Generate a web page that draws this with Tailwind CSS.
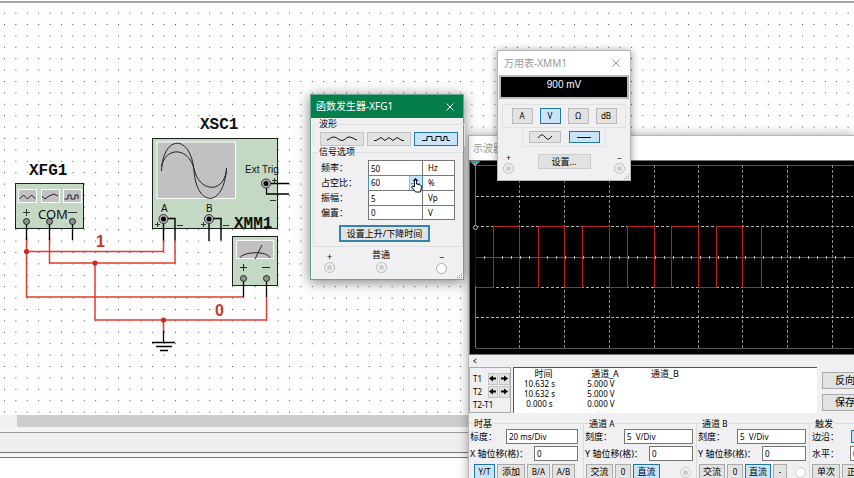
<!DOCTYPE html>
<html lang="zh-CN">
<head>
    <meta charset="UTF-8">
    <meta name="viewport" content="width=device-width, initial-scale=1.0">
    <title>XFG1 / XSC1 / XMM1</title>

    <!-- Tailwind CSS -->
    <script src="https://cdn.jsdelivr.net/npm/@tailwindcss/browser@4"></script>
</head>
<body class="h-screen overflow-hidden bg-white text-black font-['Noto_Sans','Noto_Sans_CJK_SC',sans-serif]">
    <div class="relative h-full flex flex-col overflow-hidden">
        <!-- Schematic -->
        <main class="flex-1 min-h-0 mt-px border-t-2 border-[#a6a6a6] bg-[#fefefe]">
            <svg class="block w-full h-full" fill="none">
                <defs>
                    <pattern id="dots" x="4" y="9.6" width="11.4" height="11.4" patternUnits="userSpaceOnUse">
                        <rect width="1" height="1" fill="#000" fill-opacity=".7"/>
                    </pattern>
                </defs>
                <rect width="100%" height="100%" fill="url(#dots)"/>
                <g transform="translate(0 -3)">
                    <!-- XFG1 -->
                    <rect x="15.5" y="183.5" width="68" height="45" fill="#c3d9c4" stroke="#1c211c"/>
                    <g fill="#c2c0c3" stroke="#fff">
                        <rect x="18.5" y="189.5" width="18" height="13"/>
                        <rect x="41.5" y="189.5" width="18" height="13"/>
                        <rect x="63.5" y="189.5" width="18" height="13"/>
                    </g>
                    <path d="M19.5 199l4-4 4 4 4-4 4 4M42 196l3 3 4-3 5-2 4 2M64.5 199H68v-4h3v4h4v-4h3v4" stroke="#222"/>
                    <path d="M23 212.5h7M26.5 209v7M68 212.5h9" stroke="#333"/>
                    <!-- XSC1 -->
                    <rect x="152.5" y="138.5" width="125" height="90" fill="#c3d9c4" stroke="#1c211c"/>
                    <rect x="157" y="142" width="78.5" height="56.5" fill="#c2c0c3" stroke="#fff"/>
                    <path d="M161.5 171C163 134 191 134 194 171S224 208 226.5 168M161.5 167C165 146 189 147 194 169S222 195 226.5 171" stroke="#222"/>
                    <path d="M266 183.5h23M266.5 183v11h22.5" stroke="#000" stroke-width="1.3"/>
                    <path d="M163.5 219v22M164 218.5h11v22M209 219v22M209 218.5h12v22" stroke="#000" stroke-width="1.4"/>
                    <path d="M155 224.5h5M157.5 222v5M201 224.5h5M203.5 222v5M177 225.5h6M223 225.5h6M272 180.5h5M274.5 178v5M270 200.5h6" stroke="#333"/>
                    <!-- XMM1 -->
                    <rect x="232.5" y="236.5" width="45" height="49" fill="#c3d9c4" stroke="#1c211c"/>
                    <rect x="236.5" y="240.5" width="37" height="18" fill="#c2c0c3" stroke="#fff"/>
                    <path d="M240 258c2-6 27-8 30 0M255 259l7-14" stroke="#222"/>
                    <path d="M240 267.5h7M243.5 264v7M262 267.5h8" stroke="#222"/>
                    <!-- Wires -->
                    <g stroke="#e03c30" stroke-width="1.5">
                        <path d="M26.5 238V297H243.5M26.5 251.5H163.5V240M49.5 238V263H175V240"/>
                        <path d="M95 263V320H266.5V297M163.5 320V333"/>
                    </g>
                    <path d="M26.5 222v18M49.5 222v18M72.5 222v18M243.5 279v18M266.5 279v18M163.5 331v11M152 342.5h23M156 346.5h16M160 350.5h8" stroke="#000" stroke-width="1.3"/>
                    <g fill="#c62d22">
                        <circle cx="26.5" cy="251.5" r="2.6"/>
                        <circle cx="95" cy="263" r="2.6"/>
                        <circle cx="163.5" cy="320" r="2.6"/>
                    </g>
                    <!-- Terminals -->
                    <g fill="#8d9490" stroke="#222">
                        <circle cx="26.5" cy="221.5" r="3"/>
                        <circle cx="49.5" cy="221.5" r="3"/>
                        <circle cx="72.5" cy="221.5" r="3"/>
                        <circle cx="243.5" cy="278.5" r="3"/>
                        <circle cx="266.5" cy="278.5" r="3"/>
                    </g>
                    <g fill="#b5b8b6" stroke="#333">
                        <circle cx="163.5" cy="219" r="4.5"/>
                        <circle cx="209" cy="219" r="4.5"/>
                        <circle cx="266" cy="183.5" r="4.5"/>
                    </g>
                    <g fill="#000">
                        <circle cx="163.5" cy="219" r="2.5"/>
                        <circle cx="209" cy="219" r="2.5"/>
                        <circle cx="266" cy="183.5" r="2.5"/>
                    </g>
                    <g class="font-['Courier_New','Liberation_Mono',monospace] text-[16px] font-bold" fill="#111">
                        <text x="29" y="175">XFG1</text>
                        <text x="200" y="129">XSC1</text>
                        <text x="234" y="228">XMM1</text>
                    </g>
                    <g class="font-['Liberation_Sans',sans-serif] text-[10px]" fill="#111">
                        <text x="245" y="173">Ext Trig</text>
                        <text x="161" y="212">A</text>
                        <text x="206" y="212">B</text>
                    </g>
                    <text x="38" y="219" class="text-[13px]" fill="#111">COM</text>
                    <g class="font-['Liberation_Sans',sans-serif] text-[16px] font-bold" fill="#c9362b">
                        <text x="96" y="247">1</text>
                        <text x="215" y="316">0</text>
                    </g>
                </g>
            </svg>
        </main>
        <div class="h-3 flex bg-[#cdcbcd]"><div class="w-[17px] bg-[#f1f0f2]"></div></div>
        <div class="h-[5px] bg-[#f4f3f5]"></div>
        <div class="h-5 border-t border-[#999] bg-[#f0eef1]"></div>
        <div class="h-[6px] border-y border-[#777] bg-[#f6f6f6]"></div>
        <div class="h-5 bg-white"></div>

        <!-- Oscilloscope -->
        <section class="absolute left-[468px] right-0 top-[135px] h-[360px] flex flex-col border-l border-t border-[#b5b5b5] bg-[#f0eff1] text-[9px] shadow-[0_0_10px_rgba(0,0,0,0.35)]">
            <h2 class="h-6 shrink-0 pl-1 bg-white text-[10px] leading-6 text-[#999]">示波器-XSC1</h2>
            <svg class="block w-full h-[194px] shrink-0 bg-black" fill="none">
                <path d="M0 .5H400M.5 0V194" stroke="#777"/>
                <path d="M7 5.5H384M7 188.5H384" stroke="#555"/>
                <path d="M7 97.5H384" stroke="#555"/>
                <path d="M50.5 5V188M95.5 5V188M140.5 5V188M185.5 5V188M229.5 5V188M273.5 5V188M318.5 5V188M363.5 5V188" stroke="#8a8a8a" stroke-dasharray="3 2"/>
                <path d="M7 36.5H384M7 66.5H384M7 127.5H384M7 157.5H384" stroke="#b0b0b0" stroke-dasharray="3 2"/>
                <path d="M15 97.5H384" stroke="#bbb" stroke-width="3" stroke-dasharray="1 8"/>
                <path d="M6.5 5V188" stroke="#3c9c68"/>
                <path d="M6.5 69V126" stroke="#15154a"/>
                <path d="M7 127.5H24.5V66.5H50.5V127.5H69.5V66.5H95.5V127.5H113.5V66.5H140.5V127.5H158.5V66.5H185.5V127.5H202.5V66.5H229.5V127.5H247.5V66.5H273.5V127.5H292.5V66.5" stroke="#bc1f1b"/>
                <path d="M1 1h10l-5 5z" fill="#c9d9dc"/>
                <path d="M1 1h10l-2 2H3z" fill="#39a5a5"/>
                <path d="M4 3h3v2z" fill="#cc3c3c"/>
                <circle cx="6.5" cy="67.5" r="2" fill="#000" stroke="#bbb"/>
            </svg>
            <div class="h-[13px] shrink-0 pl-[3px] flex items-center border-t border-[#777]">
                <button type="button" aria-label="向左滚动">
                    <svg class="block size-[6px]" viewBox="0 0 6 6" fill="none"><path d="M4.5 1L1.5 3l3 2" stroke="#333"/></svg>
                </button>
            </div>

            <!-- Cursor readings -->
            <div class="h-[46px] shrink-0 flex">
                <div class="w-[42px] pl-[3px] pt-1 border border-[#aaa] text-[8px] leading-[13px]">
                    <div class="flex items-center"><span class="w-[15px]">T1</span>
                        <button type="button" aria-label="T1 左移" class="w-[11px] h-3 mr-px grid place-items-center border border-[#c4c4c4] bg-[#e2e2e2]"><svg class="size-[7px]" viewBox="0 0 7 7"><path d="M0 3.5L4 .5V2.5H7V4.5H4V6.5z"/></svg></button>
                        <button type="button" aria-label="T1 右移" class="w-[11px] h-3 grid place-items-center border border-[#c4c4c4] bg-[#e2e2e2]"><svg class="size-[7px]" viewBox="0 0 7 7"><path d="M7 3.5L3 .5V2.5H0V4.5H3V6.5z"/></svg></button>
                    </div>
                    <div class="flex items-center"><span class="w-[15px]">T2</span>
                        <button type="button" aria-label="T2 左移" class="w-[11px] h-3 mr-px grid place-items-center border border-[#c4c4c4] bg-[#e2e2e2]"><svg class="size-[7px]" viewBox="0 0 7 7"><path d="M0 3.5L4 .5V2.5H7V4.5H4V6.5z"/></svg></button>
                        <button type="button" aria-label="T2 右移" class="w-[11px] h-3 grid place-items-center border border-[#c4c4c4] bg-[#e2e2e2]"><svg class="size-[7px]" viewBox="0 0 7 7"><path d="M7 3.5L3 .5V2.5H0V4.5H3V6.5z"/></svg></button>
                    </div>
                    <div>T2-T1</div>
                </div>
                <div class="flex-1 ml-[2px] border-t border-l border-[#555] bg-white">
                    <table class="table-fixed text-[8px] leading-[10px]">
                        <thead class="text-[9px] leading-[11px]">
                            <tr>
                                <th class="w-[59px] font-normal">时间</th>
                                <th class="w-[64px] font-normal">通道_A</th>
                                <th class="w-[56px] font-normal">通道_B</th>
                            </tr>
                        </thead>
                        <tbody class="text-center">
                            <tr><td class="pr-2">10.632 s</td><td class="pr-2">5.000 V</td><td></td></tr>
                            <tr><td class="pr-2">10.632 s</td><td class="pr-2">5.000 V</td><td></td></tr>
                            <tr><td class="pr-2">0.000 s</td><td class="pr-2">0.000 V</td><td></td></tr>
                        </tbody>
                    </table>
                </div>
                <div class="w-8 ml-[5px] pt-[5px] flex flex-col gap-[5px]">
                    <button type="button" class="h-[17px] pl-3 border border-r-0 border-[#aaa] bg-[#e2e2e2] text-left text-[10px] leading-[15px] whitespace-nowrap overflow-hidden">反向</button>
                    <button type="button" class="h-[17px] pl-3 border border-r-0 border-[#aaa] bg-[#e2e2e2] text-left text-[10px] leading-[15px] whitespace-nowrap overflow-hidden">保存</button>
                </div>
            </div>

            <!-- Settings -->
            <div class="flex mt-[5px] overflow-hidden whitespace-nowrap">
                <fieldset class="w-[115px] shrink-0 border-t border-r border-[#dcdcdc] pr-[5px]">
                    <legend class="ml-1 px-px leading-[11px]">时基</legend>
                    <div class="h-[15px] flex items-center justify-between pl-px">
                        <label for="tbScale">标度：</label>
                        <input id="tbScale" value="20 ms/Div" class="w-[72px] h-[15px] pl-[2px] border border-[#777] bg-white text-[8px]">
                    </div>
                    <div class="h-[15px] mt-[2px] flex items-center justify-between pl-px">
                        <label for="tbPos">X 轴位移(格)：</label>
                        <input id="tbPos" value="0" class="w-11 h-[15px] pl-[2px] border border-[#777] bg-white text-[8px]">
                    </div>
                    <div class="mt-[3px] pl-[5px] flex gap-[2px] text-[8px]">
                        <button type="button" class="w-[21px] h-4 border border-[#23769b] bg-[#c9e3f9]">Y/T</button>
                        <button type="button" class="w-7 h-4 border border-[#aaa] bg-[#e2e2e2] text-[9px]">添加</button>
                        <button type="button" class="w-[23px] h-4 border border-[#aaa] bg-[#e2e2e2]">B/A</button>
                        <button type="button" class="w-[23px] h-4 border border-[#aaa] bg-[#e2e2e2]">A/B</button>
                    </div>
                </fieldset>
                <fieldset class="w-[113px] shrink-0 border-t border-r border-[#dcdcdc] pr-[3px]">
                    <legend class="ml-1 px-px leading-[11px]">通道 <span class="text-[8px]">A</span></legend>
                    <div class="h-[15px] flex items-center justify-between pl-px">
                        <label for="aScale">刻度：</label>
                        <input id="aScale" value="5  V/Div" class="w-[69px] h-[15px] pl-[2px] border border-[#777] bg-white text-[8px] whitespace-pre">
                    </div>
                    <div class="h-[15px] mt-[2px] flex items-center justify-between pl-px">
                        <label for="aPos">Y 轴位移(格)：</label>
                        <input id="aPos" value="0" class="w-11 h-[15px] pl-[2px] border border-[#777] bg-white text-[8px]">
                    </div>
                    <div class="mt-[3px] pl-[2px] flex items-center gap-[2px]">
                        <button type="button" class="w-[27px] h-4 border border-[#aaa] bg-[#e2e2e2]">交流</button>
                        <button type="button" class="w-4 h-4 border border-[#aaa] bg-[#e2e2e2] text-[8px]">0</button>
                        <button type="button" class="w-[27px] h-4 border border-[#23769b] bg-[#c9e3f9]">直流</button>
                        <input type="radio" name="chA" aria-label="通道 A" class="appearance-none size-[11px] ml-auto mr-[2px] rounded-full border border-[#ccc] bg-[#ccc] bg-clip-content p-[2px]">
                    </div>
                </fieldset>
                <fieldset class="w-[113px] shrink-0 border-t border-r border-[#dcdcdc] pr-[3px]">
                    <legend class="ml-1 px-px leading-[11px]">通道 <span class="text-[8px]">B</span></legend>
                    <div class="h-[15px] flex items-center justify-between pl-px">
                        <label for="bScale">刻度：</label>
                        <input id="bScale" value="5  V/Div" class="w-[69px] h-[15px] pl-[2px] border border-[#777] bg-white text-[8px] whitespace-pre">
                    </div>
                    <div class="h-[15px] mt-[2px] flex items-center justify-between pl-px">
                        <label for="bPos">Y 轴位移(格)：</label>
                        <input id="bPos" value="0" class="w-11 h-[15px] pl-[2px] border border-[#777] bg-white text-[8px]">
                    </div>
                    <div class="mt-[3px] pl-[2px] flex items-center gap-[2px]">
                        <button type="button" class="w-[26px] h-4 border border-[#aaa] bg-[#e2e2e2]">交流</button>
                        <button type="button" class="w-4 h-4 border border-[#aaa] bg-[#e2e2e2] text-[8px]">0</button>
                        <button type="button" class="w-[26px] h-4 border border-[#23769b] bg-[#c9e3f9]">直流</button>
                        <button type="button" class="w-[14px] h-4 border border-[#aaa] bg-[#e2e2e2] text-[8px]">-</button>
                        <input type="radio" name="chB" aria-label="通道 B" class="appearance-none size-[11px] ml-auto rounded-full border border-[#ccc] bg-white">
                    </div>
                </fieldset>
                <fieldset class="w-[115px] shrink-0 border-t border-[#dcdcdc]">
                    <legend class="ml-1 px-px leading-[11px]">触发</legend>
                    <div class="h-[15px] flex items-center pl-[2px]">
                        <label for="edge" class="w-[39px]">边沿：</label>
                        <button type="button" id="edge" class="w-5 h-[13px] border border-[#23769b] bg-[#c9e3f9]"></button>
                    </div>
                    <div class="h-[15px] mt-[2px] flex items-center pl-[2px]">
                        <label for="level" class="w-[38px]">水平：</label>
                        <input id="level" value="0" class="w-11 h-[15px] pl-[2px] border border-[#777] bg-white text-[8px]">
                    </div>
                    <div class="mt-[3px] pl-[2px] flex gap-[2px]">
                        <button type="button" class="w-7 h-4 border border-[#aaa] bg-[#e2e2e2]">单次</button>
                        <button type="button" class="w-7 h-4 border border-[#aaa] bg-[#e2e2e2]">正常</button>
                    </div>
                </fieldset>
            </div>
        </section>

        <!-- Multimeter -->
        <section class="absolute left-[497px] top-[50px] w-[134px] flex flex-col border border-[#b5b5b5] bg-[#f0eff1] text-[8px] shadow-[0_1px_8px_rgba(0,0,0,0.4)]">
            <header class="h-6 px-[6px] pr-[10px] flex items-center justify-between bg-white text-[10px] text-[#999]">
                <h2>万用表-XMM1</h2>
                <button type="button" aria-label="关闭"><svg class="block size-2" viewBox="0 0 8 8" fill="none"><path d="M.5.5l7 7M7.5.5l-7 7" stroke="#999"/></svg></button>
            </header>
            <output class="h-6 mx-px border-2 border-[#bbb] bg-black text-center text-[10px] leading-4 text-white font-['Liberation_Sans',sans-serif]">900 mV</output>
            <div class="mx-1 mt-[5px] h-6 flex items-center justify-center gap-[7px] border border-[#e2e2e2]">
                <button type="button" class="w-[21px] h-4 border border-[#bbb] bg-[#e2e2e2]">A</button>
                <button type="button" class="w-[21px] h-4 border border-[#23769b] bg-[#c9e3f9]">V</button>
                <button type="button" class="w-[21px] h-4 border border-[#bbb] bg-[#e2e2e2]">Ω</button>
                <button type="button" class="w-[21px] h-4 border border-[#bbb] bg-[#e2e2e2]">dB</button>
            </div>
            <div class="h-[19px] w-[84px] self-center flex items-center justify-center gap-2 border border-t-0 border-[#e2e2e2]">
                <button type="button" aria-label="交流" class="w-8 h-3 grid place-items-center border border-[#bbb] bg-[#e2e2e2]"><svg class="w-4 h-2" fill="none"><path d="M1 5C4 1 6 1 8 4S12 7 15 3" stroke="#111"/></svg></button>
                <button type="button" aria-label="直流" class="w-[31px] h-3 grid place-items-center border border-[#23769b] bg-[#c9e3f9]"><svg class="w-4 h-2" fill="none"><path d="M1 4.5H15" stroke="#111"/></svg></button>
            </div>
            <div class="h-[33px] pt-[6px] px-[5px] flex justify-between">
                <label class="w-[11px] flex flex-col items-center gap-px leading-[9px]">+<input type="radio" name="mmPlus" class="appearance-none size-[11px] rounded-full border border-[#bbb] bg-[#ccc] bg-clip-content p-[2px]"></label>
                <button type="button" class="w-[53px] h-[15px] mt-px border border-[#ccc] bg-[#e2e2e2] text-[9px] leading-3">设置...</button>
                <label class="w-[11px] flex flex-col items-center gap-px leading-[9px]">−<input type="radio" name="mmMinus" class="appearance-none size-[11px] rounded-full border border-[#bbb] bg-[#ccc] bg-clip-content p-[2px]"></label>
            </div>
            <svg class="absolute right-0 bottom-0 size-[7px]" fill="#aaa"><path d="M5 1h1v1H5zM3 3h1v1H3zM5 3h1v1H5zM1 5h1v1H1zM3 5h1v1H3zM5 5h1v1H5z"/></svg>
        </section>

        <!-- Function generator -->
        <section class="absolute left-[310px] top-[94px] w-[154px] flex flex-col border border-[#67a78d] bg-[#f0eff1] text-[9px] shadow-[0_2px_12px_rgba(0,0,0,0.5)]">
            <header class="h-[23px] pl-[5px] pr-[9px] flex items-center justify-between bg-[#057e4c] text-[10px] text-white">
                <h2>函数发生器-XFG1</h2>
                <button type="button" aria-label="关闭"><svg class="block size-2" viewBox="0 0 8 8" fill="none"><path d="M.5.5l7 7M7.5.5l-7 7" stroke="#fff"/></svg></button>
            </header>
            <fieldset class="mx-[2px] border-t border-x border-[#e0e0e0] px-[6px]">
                <legend class="-ml-[2px] px-px leading-3">波形</legend>
                <div class="mt-[2px] flex gap-[3px] justify-center">
                    <button type="button" aria-label="正弦波" class="w-11 h-[14px] grid place-items-center border border-[#c4c4c4] bg-[#e2e2e2]"><svg class="w-8 h-2" fill="none"><path d="M1 5C4 4 5 2 8 2S13 5.5 16 5.5 20 2 23 2 28 4 31 5" stroke="#111"/></svg></button>
                    <button type="button" aria-label="三角波" class="w-11 h-[14px] grid place-items-center border border-[#c4c4c4] bg-[#e2e2e2]"><svg class="w-8 h-2" fill="none"><path d="M1 5.5h2l5-3 4 3 4-3 4 3 4-3 5 3h2" stroke="#111"/></svg></button>
                    <button type="button" aria-label="方波" class="w-11 h-[14px] grid place-items-center border border-[#23769b] bg-[#c9e3f9]"><svg class="w-8 h-2" fill="none"><path d="M2 5.5h5v-4h5v4h4v-4h5v4h3v-4h3v4h3" stroke="#111"/></svg></button>
                </div>
            </fieldset>
            <fieldset class="mx-[2px] border border-[#e0e0e0] px-[7px] pb-1">
                <legend class="-ml-[3px] px-px leading-3">信号选项</legend>
                <div class="mt-[2px] grid grid-cols-[47px_55px_32px] auto-rows-[15px] items-center">
                    <label for="freq">频率：</label>
                    <input id="freq" value="50" class="h-full min-w-0 pl-[2px] border border-b-0 border-[#777] bg-white text-[8px]">
                    <span class="h-full pl-[5px] border border-l-0 border-b-0 border-[#777] bg-white text-[8px] leading-[13px]">Hz</span>
                    <label for="duty">占空比：</label>
                    <div class="h-full flex border border-b-0 border-[#3f93bd] bg-white">
                        <input id="duty" value="60" class="w-10 pl-[2px] text-[8px]">
                        <button type="button" aria-label="调节占空比" class="w-[13px] bg-[#c9e3f9] border-l border-[#bbb]"><svg class="block w-[11px] h-[14px]"><path d="M1 7h9v1H1z" fill="#5b9cd0"/><path d="M5.5 2l3 3h-6zM5.5 13l3-3h-6z"/></svg></button>
                    </div>
                    <span class="h-full pl-[5px] border border-l-0 border-b-0 border-[#777] bg-white text-[8px] leading-[13px]">%</span>
                    <label for="amp">振幅：</label>
                    <input id="amp" value="5" class="h-full min-w-0 pl-[2px] border border-b-0 border-[#777] bg-white text-[8px]">
                    <span class="h-full pl-[5px] border border-l-0 border-b-0 border-[#777] bg-white text-[8px] leading-[13px]">Vp</span>
                    <label for="offset">偏置：</label>
                    <input id="offset" value="0" class="h-full min-w-0 pl-[2px] border border-[#777] bg-white text-[8px]">
                    <span class="h-full pl-[5px] border border-l-0 border-[#777] bg-white text-[8px] leading-[13px]">V</span>
                </div>
                <button type="button" class="block w-[91px] h-[17px] mt-[5px] ml-[18px] border-2 border-[#3483a8] bg-[#e2e2e2] text-[9px] leading-3 whitespace-nowrap">设置上升/下降时间</button>
            </fieldset>
            <div class="h-8 pt-[2px] pl-[13px] pr-4 grid grid-cols-[11px_92px_1fr]">
                <label class="w-[11px] pt-[3px] flex flex-col items-center leading-[10px]">+<input type="radio" name="fgPlus" class="appearance-none size-[11px] rounded-full border border-[#bbb] bg-[#ccc] bg-clip-content p-[2px]"></label>
                <label class="flex flex-col items-center gap-[2px] leading-[11px]">普通<input type="radio" name="fgCom" class="appearance-none size-[11px] rounded-full border border-[#bbb] bg-[#ccc] bg-clip-content p-[2px]"></label>
                <label class="w-[11px] pt-1 flex flex-col items-center justify-self-end leading-[10px]">−<input type="radio" name="fgMinus" class="appearance-none size-[11px] rounded-full border border-[#aaa] bg-white"></label>
            </div>
            <svg class="absolute right-0 bottom-0 size-[7px]" fill="#999"><path d="M5 1h1v1H5zM3 3h1v1H3zM5 3h1v1H5zM1 5h1v1H1zM3 5h1v1H3zM5 5h1v1H5z"/></svg>
        </section>

        <!-- Mouse pointer -->
        <svg class="absolute left-[411px] top-[179px] w-[11px] h-[14px]" viewBox="0 0 11 14"><path d="M3.5 1.5q1-1 2 0V5l4 1q1 .5 1 2L9.5 13h-5L1 8.5Q.5 7 2 7l1.5 1z" fill="#fff" stroke="#111"/></svg>
    </div>
</body>
</html>
